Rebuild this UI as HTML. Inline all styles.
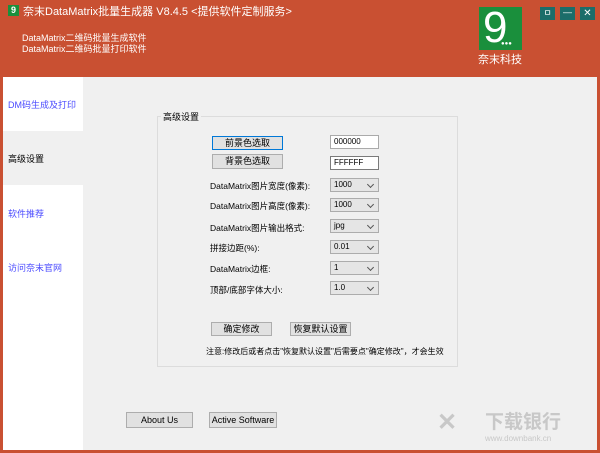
<!DOCTYPE html>
<html><head><meta charset="utf-8"><style>
*{margin:0;padding:0;box-sizing:border-box}
body{width:600px;height:453px;overflow:hidden;background:#c95032;font-family:"Liberation Sans","Noto Sans CJK SC",sans-serif;position:relative}
.a{position:absolute}
.t{color:#fff;font-size:11px;white-space:nowrap}
.main{position:absolute;left:3px;top:77px;width:594px;height:373px;background:#f0f0f0}
.side{position:absolute;left:3px;top:77px;width:80px;height:373px;background:#fff}
.si{position:absolute;left:8px;font-size:9px;color:#4a4aff;white-space:nowrap}
.btn{position:absolute;background:#e1e1e1;border:1px solid #adadad;font-size:9px;text-align:center;color:#000;white-space:nowrap}
.inp{position:absolute;background:#fff;border:1px solid #7a7a7a;font-size:8px;padding-left:3px;line-height:12px}
.sel{position:absolute;width:49px;height:14px;background:#e5e5e5;border:1px solid #acacac;font-size:8px;padding-left:3px;line-height:12px}
.sel:after{content:"";position:absolute;right:5px;top:3px;width:4px;height:4px;border-right:1px solid #555;border-bottom:1px solid #555;transform:rotate(45deg)}
.lb{position:absolute;left:210px;font-size:8.5px;color:#000;white-space:nowrap}
</style></head><body>
<div class="a" style="left:8px;top:5px;width:11px;height:11px;background:#1a8f3c;color:#fff;font-size:9px;line-height:11px;text-align:center;font-weight:bold">9</div>
<div class="a t" style="left:23px;top:3px;font-size:11px">奈末DataMatrix批量生成器 V8.4.5 &lt;提供软件定制服务&gt;</div>
<div class="a t" style="left:22px;top:31px;font-size:9px">DataMatrix二维码批量生成软件</div>
<div class="a t" style="left:22px;top:42px;font-size:9px">DataMatrix二维码批量打印软件</div>
<div class="a" style="left:479px;top:7px;width:43px;height:43px;background:#1a8f3c;color:#fff;font-size:44px;line-height:42px;padding-left:4px">9<span style="position:absolute;left:22px;top:34px;font-size:6px;line-height:6px;letter-spacing:0">●●●</span></div>
<div class="a t" style="left:478px;top:51px;font-size:11px">奈末科技</div>
<div class="a" style="left:540px;top:7px;width:15px;height:13px;background:#1b6d6a;color:#fff;font-size:9px;text-align:center;line-height:13px">ㅁ</div>
<div class="a" style="left:560px;top:7px;width:15px;height:13px;background:#1b6d6a;color:#fff;font-size:9px;text-align:center;line-height:11px">—</div>
<div class="a" style="left:580px;top:7px;width:15px;height:13px;background:#1b6d6a;color:#fff;font-size:10px;text-align:center;line-height:13px">✕</div>
<div class="main"></div>
<div class="side"></div>
<div class="a" style="left:3px;top:131px;width:80px;height:54px;background:#f0f0f0"></div>
<div class="si" style="top:98px">DM码生成及打印</div>
<div class="si" style="top:152px;color:#000">高级设置</div>
<div class="si" style="top:207px">软件推荐</div>
<div class="si" style="top:261px">访问奈末官网</div>
<div class="a" style="left:157px;top:116px;width:301px;height:251px;border:1px solid #dcdcdc"></div>
<div class="a" style="left:161px;top:110px;font-size:9px;background:#f0f0f0;padding:0 2px">高级设置</div>
<div class="btn" style="left:212px;top:136px;width:71px;height:14px;border-color:#0078d7;line-height:12px">前景色选取</div>
<div class="btn" style="left:212px;top:154px;width:71px;height:15px;line-height:13px">背景色选取</div>
<div class="inp" style="left:330px;top:135px;width:49px;height:14px;border-color:#aaa">000000</div>
<div class="inp" style="left:330px;top:156px;width:49px;height:14px">FFFFFF</div>
<div class="lb" style="top:180px">DataMatrix图片宽度(像素):</div><div class="sel" style="left:330px;top:178px">1000</div>
<div class="lb" style="top:200px">DataMatrix图片高度(像素):</div><div class="sel" style="left:330px;top:198px">1000</div>
<div class="lb" style="top:222px">DataMatrix图片输出格式:</div><div class="sel" style="left:330px;top:219px">jpg</div>
<div class="lb" style="top:242px">拼接边距(%):</div><div class="sel" style="left:330px;top:240px">0.01</div>
<div class="lb" style="top:263px">DataMatrix边框:</div><div class="sel" style="left:330px;top:261px">1</div>
<div class="lb" style="top:284px">顶部/底部字体大小:</div><div class="sel" style="left:330px;top:281px">1.0</div>
<div class="btn" style="left:211px;top:322px;width:61px;height:14px;line-height:12px">确定修改</div>
<div class="btn" style="left:290px;top:322px;width:61px;height:14px;line-height:12px">恢复默认设置</div>
<div class="a" style="left:206px;top:346px;font-size:8px;white-space:nowrap">注意:修改后或者点击"恢复默认设置"后需要点"确定修改"，才会生效</div>
<div class="btn" style="left:126px;top:412px;width:67px;height:16px;line-height:14px">About Us</div>
<div class="btn" style="left:209px;top:412px;width:68px;height:16px;line-height:14px">Active Software</div>
<div class="a" style="left:437px;top:408px;font-size:24px;color:#c8c8c8;font-weight:bold">✕</div>
<div class="a" style="left:485px;top:407px;font-size:19px;color:#c8c8c8;font-weight:bold;white-space:nowrap">下载银行</div>
<div class="a" style="left:485px;top:434px;font-size:8px;color:#c8c8c8;white-space:nowrap">www.downbank.cn</div>
</body></html>
